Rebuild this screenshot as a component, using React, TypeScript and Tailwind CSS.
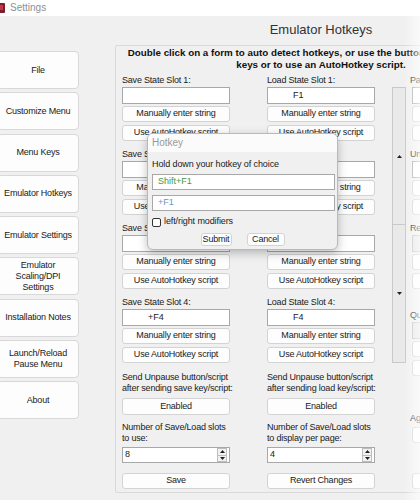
import React from "react";

type P = { children?: React.ReactNode; className?: string };

const Btn = ({ children, className = "" }: P) => (
  <div
    className={
      "flex items-center justify-center bg-[#fdfdfd] border border-[#d3d3d3] rounded-[3px] text-[9px] tracking-[-0.2px] text-[#1a1a1a] whitespace-nowrap " +
      className
    }
  >
    {children}
  </div>
);

const TextBox = ({ children, className = "" }: P) => (
  <div
    className={
      "h-[17px] mt-[1px] bg-white border border-[#a8a8a8] flex items-center text-[9px] pl-[25px] text-[#1a1a1a] " +
      className
    }
  >
    {children}
  </div>
);

const Up = () => (
  <svg width="5" height="3" viewBox="0 0 5 3">
    <path d="M0 3 L2.5 0 L5 3 Z" fill="#222" />
  </svg>
);
const Down = () => (
  <svg width="5" height="3" viewBox="0 0 5 3">
    <path d="M0 0 L2.5 3 L5 0 Z" fill="#222" />
  </svg>
);

const Spinner = () => (
  <div className="mr-[2px] w-[10px] h-[14px] flex flex-col">
    <div className="flex-1 flex items-center justify-center bg-[#f2f2f2] border border-[#bdbdbd]">
      <Up />
    </div>
    <div className="flex-1 flex items-center justify-center bg-[#f2f2f2] border border-[#bdbdbd] border-t-0">
      <Down />
    </div>
  </div>
);

const Slot = ({ label, value }: { label: string; value: string }) => (
  <div className="flex flex-col mb-[7px]">
    <div className="h-[12px] leading-[12px] text-[9px] tracking-[-0.2px] whitespace-nowrap">{label}</div>
    <TextBox>{value}</TextBox>
    <Btn className="mt-[2px] h-[16px]">Manually enter string</Btn>
    <Btn className="mt-[3px] h-[16px]">Use AutoHotkey script</Btn>
  </div>
);

const Column = ({
  kind,
  values,
  sendLine2,
  numLine2,
  num,
  last,
}: {
  kind: string;
  values: string[];
  sendLine2: string;
  numLine2: string;
  num: string;
  last: string;
}) => (
  <div className="w-[108px] shrink-0 flex flex-col">
    {values.map((v, i) => (
      <Slot key={i} label={`${kind} State Slot ${i + 1}:`} value={v} />
    ))}
    <div className="mt-[2px] text-[9px] tracking-[-0.2px] leading-[11px] whitespace-nowrap">
      Send Unpause button/script
      <br />
      {sendLine2}
    </div>
    <Btn className="mt-[4px] h-[17px]">Enabled</Btn>
    <div className="mt-[7px] text-[9px] tracking-[-0.2px] leading-[11px] whitespace-nowrap">
      Number of Save/Load slots
      <br />
      {numLine2}
    </div>
    <div className="mt-[3px] h-[16px] bg-white border border-[#a8a8a8] flex items-center text-[9px]">
      <span className="flex-1 pl-[2px]">{num}</span>
      <Spinner />
    </div>
    <Btn className="mt-[10px] h-[16px]">{last}</Btn>
  </div>
);

const SmallSlot = ({ label, grey, className = "" }: { label: string; grey?: boolean; className?: string }) => (
  <div className={"flex flex-col " + className}>
    <div className="h-[12px] leading-[12px] text-[9px] tracking-[-0.2px] whitespace-nowrap">{label}</div>
    <div
      className={
        "ml-[2px] h-[17px] mt-[1px] border " +
        (grey ? "bg-[#e6e6e6] border-[#c4c4c4]" : "bg-white border-[#a8a8a8]")
      }
    />
    <Btn className="ml-[2px] mt-[2px] h-[16px]"> </Btn>
    <Btn className="ml-[2px] mt-[3px] h-[16px]"> </Btn>
  </div>
);

const navItems: React.ReactNode[] = [
  "File",
  "Customize Menu",
  "Menu Keys",
  "Emulator Hotkeys",
  "Emulator Settings",
  <>
    Emulator
    <br />
    Scaling/DPI
    <br />
    Settings
  </>,
  "Installation Notes",
  <>
    Launch/Reload
    <br />
    Pause Menu
  </>,
  "About",
];

export default function App() {
  return (
    <div className="relative w-[420px] h-[500px] overflow-hidden bg-[#f0f0f0] font-['Liberation_Sans',Arial,sans-serif] text-[#1a1a1a]">
      {/* title bar */}
      <div className="h-[16px] bg-white flex items-center">
        <svg width="10" height="10" viewBox="0 0 10 10" className="ml-[-5px]">
          <rect x="0" y="0" width="10" height="10" rx="1" fill="#7a1f2b" />
          <rect x="4" y="2" width="4" height="5" fill="#c0394a" />
        </svg>
        <span className="ml-[5px] text-[10px] leading-[16px] text-[#8f8f8f]">Settings</span>
      </div>

      <div className="flex">
        {/* nav */}
        <div className="ml-[-3px] w-[82px] shrink-0 flex flex-col gap-[3.3px] pt-[35px]">
          {navItems.map((n, i) => (
            <div
              key={i}
              className="h-[38px] flex items-center justify-center text-center bg-[#fdfdfd] border border-[#d8d8d8] rounded-[4px] text-[9px] tracking-[-0.2px] leading-[11px] text-[#1a1a1a]"
            >
              <span>{n}</span>
            </div>
          ))}
        </div>

        {/* main */}
        <div className="ml-[36px] w-[412px] shrink-0 flex flex-col">
          <div className="mt-[6px] h-[16px] leading-[16px] text-center text-[13px] text-[#333]">
            Emulator Hotkeys
          </div>
          <div className="mt-[7px] border border-[#d9d9d9] rounded-[2px] pt-[1px] pb-[3px]">
            <div className="text-center font-bold text-[9.8px] leading-[12px] text-[#111] whitespace-nowrap">
              Double click on a form to auto detect hotkeys, or use the buttons to manually enter
              <br />
              keys or to use an AutoHotkey script.
            </div>
            <div className="mt-[3px] pl-[6px] flex items-start">
              <Column
                kind="Save"
                values={["", "", "", "+F4"]}
                sendLine2="after sending save key/script:"
                numLine2="to use:"
                num="8"
                last="Save"
              />
              <div className="ml-[37px]">
                <Column
                  kind="Load"
                  values={["F1", "", "", "F4"]}
                  sendLine2="after sending load key/script:"
                  numLine2="to display per page:"
                  num="4"
                  last="Revert Changes"
                />
              </div>
              {/* scroll bar */}
              <div className="ml-[17px] mt-[13px] w-[14px] h-[276px] shrink-0 flex flex-col border border-[#c9c9c9] bg-[#e9e9e9]">
                <div className="h-[137px] flex items-center justify-center border-b border-[#c9c9c9]">
                  <Up />
                </div>
                <div className="flex-1 flex items-center justify-center">
                  <Down />
                </div>
              </div>
              {/* col 4 */}
              <div className="ml-[4px] w-[100px] shrink-0 flex flex-col">
                <SmallSlot label="Pause Hotkey:" className="mb-[7px]" />
                <SmallSlot label="Unpause Hotkey:" className="mb-[7px]" />
                <SmallSlot label="Reset Hotkey:" grey />
                <SmallSlot label="Quit Hotkey:" grey className="mt-[20px]" />
                <div className="mt-[36px] h-[12px] leading-[12px] text-[9px] whitespace-nowrap">Again</div>
                <Btn className="ml-[2px] mt-[3px] h-[16px]"> </Btn>
                <Btn className="ml-[2px] mt-[30px] h-[16px]"> </Btn>
              </div>
            </div>
          </div>
        </div>
      </div>

      {/* hotkey dialog */}
      <div className="absolute left-[147px] top-[133px] w-[191px] h-[117px] rounded-[6px] border border-[#b9b9b9] bg-[#f0f0f0] overflow-hidden shadow-[0_3px_10px_rgba(0,0,0,0.25)]">
        <div className="h-[18px] bg-[#fbfbfb] pl-[4px] text-[10px] leading-[18px] text-[#9a9a9a]">Hotkey</div>
        <div className="pl-[4px] flex flex-col">
          <div className="mt-[6px] h-[12px] leading-[12px] text-[9px] tracking-[-0.1px]">
            Hold down your hotkey of choice
          </div>
          <div className="mt-[4px] w-[183px] h-[16px] bg-white border border-[#a8a8a8] flex items-center pl-[5px] text-[9px] text-[#3f9a3f]">
            Shift+F1
          </div>
          <div className="mt-[5px] w-[183px] h-[16px] bg-white border border-[#a8a8a8] flex items-center pl-[5px] text-[9px] text-[#6e93c8]">
            +F1
          </div>
          <div className="mt-[5px] h-[12px] flex items-center">
            <div className="w-[9px] h-[9px] bg-white border border-[#333] rounded-[2px]" />
            <span className="ml-[3px] text-[9px] tracking-[-0.1px]">left/right modifiers</span>
          </div>
        </div>
        <div className="mt-[5px] flex justify-center gap-[15px]">
          <Btn className="w-[31px] h-[13px]">Submit</Btn>
          <Btn className="w-[38px] h-[13px]">Cancel</Btn>
        </div>
      </div>

      {/* right edge fade */}
      <div className="absolute right-0 top-0 h-full w-[16px] bg-linear-to-r from-transparent to-[rgba(255,255,255,0.65)]" />
    </div>
  );
}
